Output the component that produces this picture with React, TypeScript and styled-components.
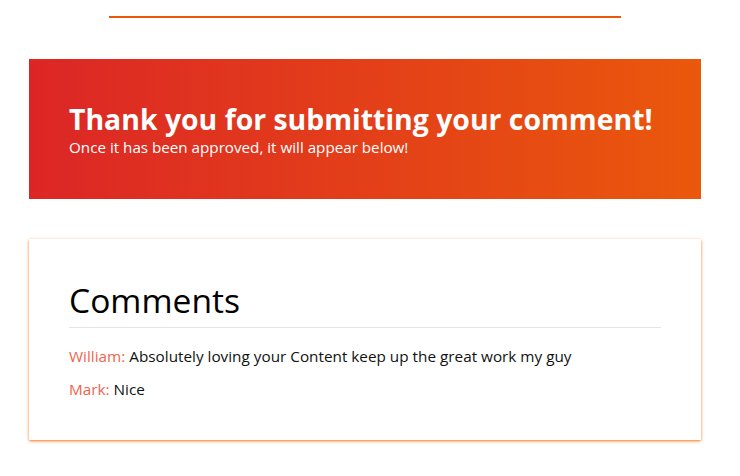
import { createGlobalStyle, styled } from "styled-components"

const comments = [
  { name: "William", text: "Absolutely loving your Content keep up the great work my guy" },
  { name: "Mark", text: "Nice" },
]

const GlobalStyle = createGlobalStyle`
  body {
    margin: 0;
    background: #ffffff;
    font-family: "Open Sans", "Noto Sans", sans-serif;
  }
`

export default function App() {
  return (
    <>
      <GlobalStyle />
      <Page>
        <TopRule />
        <Banner>
          <BannerTitle>Thank you for submitting your comment!</BannerTitle>
          <BannerText>Once it has been approved, it will appear below!</BannerText>
        </Banner>
        <Card>
          <CardTitle>Comments</CardTitle>
          <CommentList>
            {comments.map((c) => (
              <Comment key={c.name}>
                <Author>{c.name}:</Author> {c.text}
              </Comment>
            ))}
          </CommentList>
        </Card>
      </Page>
    </>
  )
}

const Page = styled.div`
  width: 730px;
  display: flex;
  flex-direction: column;
  align-items: center;
  padding-top: 16px;
  padding-bottom: 20px;
`

const TopRule = styled.div`
  width: 512px;
  height: 2px;
  background: #ea580c;
`

const Banner = styled.div`
  box-sizing: border-box;
  width: 672px;
  height: 140px;
  margin-top: 41px;
  padding: 42px 40px 0;
  background: linear-gradient(to right, #dc2626, #ea580c);
  color: #ffffff;
`

const BannerTitle = styled.h1`
  margin: 0;
  font-size: 28.4px;
  font-weight: 700;
  line-height: 36px;
  white-space: nowrap;
`

const BannerText = styled.p`
  margin: 0;
  font-size: 15.2px;
  line-height: 20px;
`

const Card = styled.div`
  box-sizing: border-box;
  width: 672px;
  margin-top: 40px;
  padding: 40px 40px 40px;
  background: #ffffff;
  box-shadow: 0 1px 3px 0 rgba(249, 115, 22, 0.85),
    0 1px 2px -1px rgba(249, 115, 22, 0.85);
`

const CardTitle = styled.h2`
  margin: 0;
  padding-bottom: 6px;
  border-bottom: 1px solid #e5e5e5;
  font-size: 33.6px;
  font-weight: 400;
  line-height: 42px;
  color: #000000;
`

const CommentList = styled.div`
  display: flex;
  flex-direction: column;
  gap: 12px;
  margin-top: 18px;
`

const Comment = styled.div`
  font-size: 15.3px;
  line-height: 21px;
  color: #111111;
`

const Author = styled.span`
  color: #f0644f;
`
